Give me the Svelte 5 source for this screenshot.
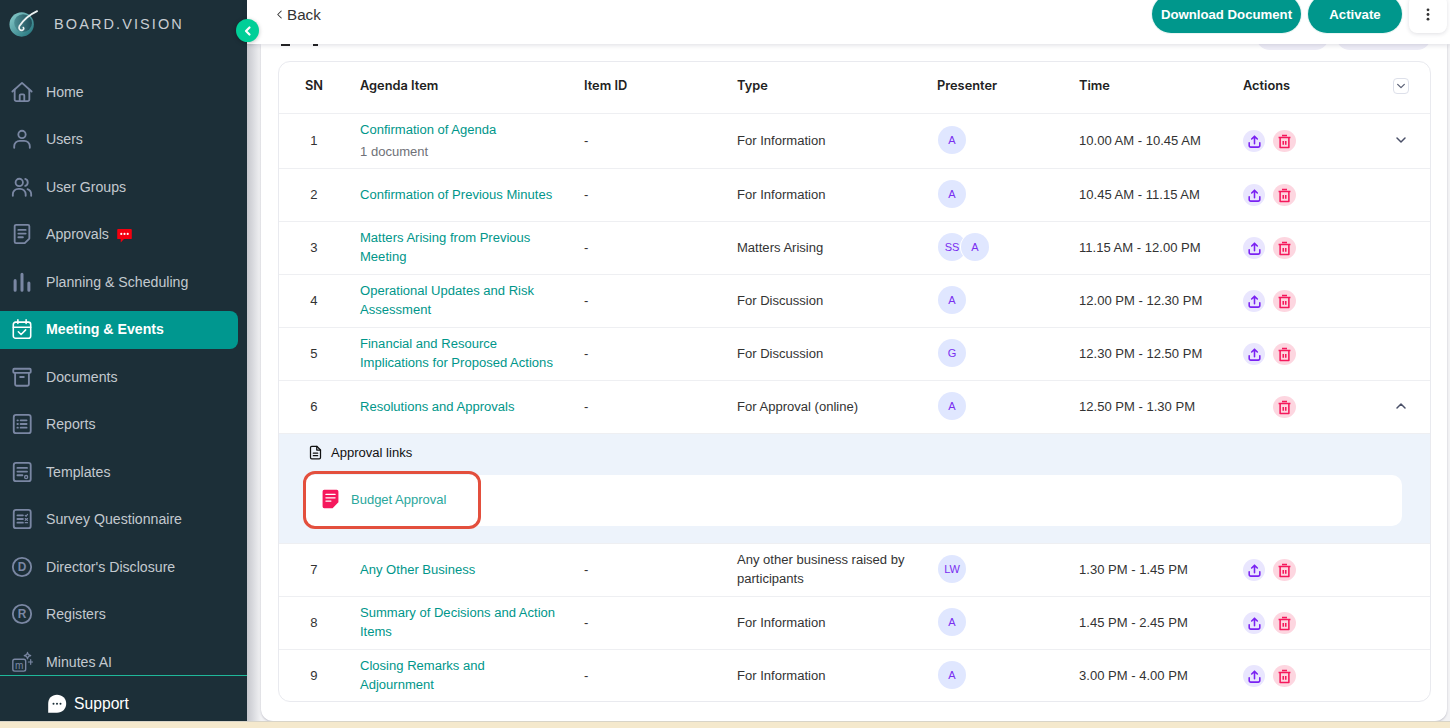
<script>
  const nav = [
    { label: 'Home', icon: 'home' },
    { label: 'Users', icon: 'user' },
    { label: 'User Groups', icon: 'users' },
    { label: 'Approvals', icon: 'approvals', badge: true },
    { label: 'Planning & Scheduling', icon: 'bars' },
    { label: 'Meeting & Events', icon: 'calendar', active: true },
    { label: 'Documents', icon: 'archive' },
    { label: 'Reports', icon: 'list' },
    { label: 'Templates', icon: 'template' },
    { label: 'Survey Questionnaire', icon: 'survey' },
    { label: "Director's Disclosure", icon: 'd' },
    { label: 'Registers', icon: 'r' },
    { label: 'Minutes AI', icon: 'minutes' }
  ];
  const before = [
    { sn: 1, title: ['Confirmation of Agenda'], sub: '1 document', type: 'For Information', who: ['A'], time: '10.00 AM - 10.45 AM', h: 55, chevron: 'down' },
    { sn: 2, title: ['Confirmation of Previous Minutes'], type: 'For Information', who: ['A'], time: '10.45 AM - 11.15 AM', h: 53 },
    { sn: 3, title: ['Matters Arising from Previous', 'Meeting'], type: 'Matters Arising', who: ['SS', 'A'], time: '11.15 AM - 12.00 PM', h: 53 },
    { sn: 4, title: ['Operational Updates and Risk', 'Assessment'], type: 'For Discussion', who: ['A'], time: '12.00 PM - 12.30 PM', h: 53 },
    { sn: 5, title: ['Financial and Resource', 'Implications for Proposed Actions'], type: 'For Discussion', who: ['G'], time: '12.30 PM - 12.50 PM', h: 53 },
    { sn: 6, title: ['Resolutions and Approvals'], type: 'For Approval (online)', who: ['A'], time: '12.50 PM - 1.30 PM', h: 53, chevron: 'up', noUpload: true }
  ];
  const after = [
    { sn: 7, title: ['Any Other Business'], type: ['Any other business raised by', 'participants'], who: ['LW'], time: '1.30 PM - 1.45 PM', h: 53 },
    { sn: 8, title: ['Summary of Decisions and Action', 'Items'], type: 'For Information', who: ['A'], time: '1.45 PM - 2.45 PM', h: 53 },
    { sn: 9, title: ['Closing Remarks and', 'Adjournment'], type: 'For Information', who: ['A'], time: '3.00 PM - 4.00 PM', h: 53 }
  ];
</script>

{#snippet navIcon(name)}
  <svg class="nav-icon" viewBox="0 0 24 24" fill="none" stroke="currentColor" stroke-width="2" stroke-linecap="round" stroke-linejoin="round">
    {#if name === 'home'}
      <path d="M1.500 11.500 12 2l10.500 9.500" /><path d="M4 9.500v10.700a1.800 1.800 0 0 0 1.800 1.800h12.400a1.800 1.800 0 0 0 1.800-1.800V9.500" /><path d="M9.500 22v-6.200a1.200 1.200 0 0 1 1.200-1.200h2.600a1.200 1.200 0 0 1 1.200 1.200V22" />
    {:else if name === 'user'}
      <circle cx="12" cy="7" r="4" /><path d="M3.500 21.500v-1.500a6 6 0 0 1 6-6h5a6 6 0 0 1 6 6v1.500" />
    {:else if name === 'users'}
      <circle cx="9" cy="7" r="4" /><path d="M2 21.500V20a6 6 0 0 1 6-6h2a6 6 0 0 1 6 6v1.500" /><path d="M15.500 3.200a4 4 0 0 1 0 7.600" /><path d="M18 14.300a6 6 0 0 1 4 5.700v1.500" />
    {:else if name === 'approvals'}
      <path d="M5.500 2h13A1.500 1.500 0 0 1 20 3.500V17l-5 5H5.500A1.500 1.500 0 0 1 4 20.500v-17A1.500 1.500 0 0 1 5.500 2Z" /><path d="M8 7.500h8M8 11.500h8M8 15.500h5" />
    {:else if name === 'bars'}
      <path d="M4.500 10.500V21M12 3.500V21M19.500 13V21" stroke-width="3.300" />
    {:else if name === 'calendar'}
      <rect x="2.500" y="4.500" width="19" height="17.500" rx="2.500" stroke-width="1.700" /><path d="M2.500 10h19M7.500 2v4M16.500 2v4" stroke-width="1.700" /><path d="m8 15 3 3 5-5" stroke-width="1.700" />
    {:else if name === 'archive'}
      <rect x="2.500" y="3" width="19" height="4.500" rx="1" /><path d="M4.500 7.500V20a1.500 1.500 0 0 0 1.500 1.500h12a1.500 1.500 0 0 0 1.500-1.500V7.500" /><path d="M10 12h4" />
    {:else if name === 'list'}
      <rect x="3" y="2" width="18.500" height="20" rx="2.500" /><path d="M7 8h.5M7 12h.5M7 16h.5M10.500 8H17M10.500 12H17M10.500 16H17" />
    {:else if name === 'template'}
      <rect x="3" y="2" width="18.500" height="20" rx="2.500" /><path d="M7 7.500h10.500M7 11.500h10.500M7 15.500h5.500" /><circle cx="16.500" cy="17.500" r="1.700" stroke-width="1.400" />
    {:else if name === 'survey'}
      <rect x="3" y="2" width="18.500" height="20" rx="2.500" /><path d="M7 8h6M7 12h6M7 16h6" /><path d="M15.500 8l1 1 1.500-2M15.500 11.500l2.500 2M18 11.500l-2.500 2M15.500 16h2.500" stroke-width="1.300" />
    {:else if name === 'd' || name === 'r'}
      <circle cx="12" cy="12" r="10" /><text class="glyph" x="12" y="16.800" text-anchor="middle">{name.toUpperCase()}</text>
    {:else if name === 'minutes'}
      <rect x="2" y="9" width="14" height="13" rx="2" stroke-width="1.500" /><text class="glyph small" x="9" y="19.500" text-anchor="middle">m</text><path d="M18 1.500l1 2.500 2.500 1-2.500 1-1 2.500-1-2.500-2.500-1 2.500-1ZM19 12h5M21.500 9.500v5" stroke-width="1.300" />
    {/if}
  </svg>
{/snippet}

{#snippet chevron(dir, cls)}
  <svg class={cls} viewBox="0 0 12 12" fill="none" stroke="currentColor" stroke-width="1.500" stroke-linecap="round" stroke-linejoin="round">
    <path d={dir === 'up' ? 'M2 8l4-4 4 4' : 'M2 4l4 4 4-4'} />
  </svg>
{/snippet}

{#snippet row(r)}
  <div class="row" style="height:{r.h}px">
    <div class="sn">{r.sn}</div>
    <div class="title">
      {#each r.title as line}<span class="link">{line}</span>{/each}
      {#if r.sub}<span class="sub">{r.sub}</span>{/if}
    </div>
    <div>-</div>
    <div class="type">
      {#if Array.isArray(r.type)}{#each r.type as line}<span>{line}</span>{/each}{:else}{r.type}{/if}
    </div>
    <div class="who">
      {#each r.who as w}<span class="avatar">{w}</span>{/each}
    </div>
    <div>{r.time}</div>
    <div class="actions" class:no-upload={r.noUpload}>
      {#if !r.noUpload}
        <span class="act up">
          <svg viewBox="0 0 24 24" fill="none" stroke="currentColor" stroke-width="2.500" stroke-linecap="round" stroke-linejoin="round"><path d="M12 15.500V4M7.500 8 12 3.500 16.500 8" /><path d="M3.500 14v4.500A2.500 2.500 0 0 0 6 21h12a2.500 2.500 0 0 0 2.500-2.500V14" /></svg>
        </span>
      {/if}
      <span class="act del">
        <svg viewBox="0 0 24 24" fill="none" stroke="currentColor" stroke-width="2.500" stroke-linejoin="round"><path d="M2.500 5.500h19M8 2.500h8" /><path d="M5 6v15.500h14V6" /><path d="M10 11v6M14 11v6" /></svg>
      </span>
    </div>
    <div class="end">
      {#if r.chevron}{@render chevron(r.chevron, 'row-chev')}{/if}
    </div>
  </div>
{/snippet}

<div class="page">
  <div class="shell">
    <aside class="sidebar">
      <div class="brand">
        <svg class="logo" viewBox="0 0 32 28" fill="none">
          <defs>
            <linearGradient id="lg" x1="0" y1="0" x2="1" y2="1">
              <stop offset="0" stop-color="#8ed0cf" /><stop offset="1" stop-color="#1d6f78" />
            </linearGradient>
            <linearGradient id="lg2" x1="0" y1="0" x2="1" y2="0">
              <stop offset="0" stop-color="#4d8f95" /><stop offset="1" stop-color="#1f4d58" />
            </linearGradient>
          </defs>
          <circle cx="13.500" cy="15" r="13" fill="url(#lg)" />
          <circle cx="15" cy="13.500" r="9.500" fill="url(#lg2)" />
          <path d="M30 .8C21 5 15 10.500 11 17c-1 2.200.5 4.500 3 4.300 1.600-.2 2.200-1.800 1.300-3" stroke="#edf3f3" stroke-width="1.800" stroke-linecap="round" />
        </svg>
        <span class="brand-name">BOARD.VISION</span>
      </div>
      <nav class="nav">
        {#each nav as item}
          <div class="nav-item" class:active={item.active}>
            {@render navIcon(item.icon)}
            <span>{item.label}</span>
            {#if item.badge}
              <svg class="badge" viewBox="0 0 14 14"><path d="M1 1h12a.8.8 0 0 1 .8.8v7.700a.8.8 0 0 1-.8.8H6.500L3.500 13.500v-3.200H1a.8.8 0 0 1-.8-.8V1.800A.8.8 0 0 1 1 1Z" fill="#f4000f" /><circle cx="4" cy="5.500" r="1" fill="#fff" /><circle cx="7" cy="5.500" r="1" fill="#fff" /><circle cx="10" cy="5.500" r="1" fill="#fff" /></svg>
            {/if}
          </div>
        {/each}
      </nav>
      <div class="support">
        <svg viewBox="0 0 20 20"><path d="M10 .8c5.200 0 9.200 3.800 9.200 8.900s-4 9-9.200 9H1.200v-9C1.200 4.600 4.800.8 10 .8Z" fill="#fff" /><circle cx="6.500" cy="9.800" r="1" fill="#1c2f38" /><circle cx="10" cy="9.800" r="1" fill="#1c2f38" /><circle cx="13.500" cy="9.800" r="1" fill="#1c2f38" /></svg>
        <span>Support</span>
      </div>
    </aside>

    <button class="toggle" aria-label="Collapse sidebar">
      <svg viewBox="0 0 12 12" fill="none" stroke="#fff" stroke-width="2.200" stroke-linecap="round" stroke-linejoin="round"><path d="M7.500 2.500 4 6l3.500 3.500" /></svg>
    </button>

    <main class="main">
      <header class="topbar">
        <div class="back">
          <svg viewBox="0 0 8 12" fill="none" stroke="currentColor" stroke-width="1.200" stroke-linecap="round" stroke-linejoin="round"><path d="M6 2 2 6l4 4" /></svg>
          <span>Back</span>
        </div>
        <div class="top-actions">
          <button class="pill download">Download Document</button>
          <button class="pill activate">Activate</button>
          <button class="more" aria-label="More">
            <svg viewBox="0 0 4 16"><circle cx="2" cy="3" r="1.500" fill="#333" /><circle cx="2" cy="8" r="1.500" fill="#333" /><circle cx="2" cy="13" r="1.500" fill="#333" /></svg>
          </button>
        </div>
      </header>

      <div class="content">
        <div class="card">
          <div class="peek">
            <div class="peek-bits"><i class="b1"></i><i class="b2"></i></div>
            <div class="peek-btns"><i class="p1"></i><i class="p2"></i></div>
          </div>
          <div class="table">
            <div class="row head">
              <div class="sn">SN</div>
              <div>Agenda Item</div>
              <div>Item ID</div>
              <div>Type</div>
              <div>Presenter</div>
              <div>Time</div>
              <div>Actions</div>
              <div class="end"><span class="head-toggle">{@render chevron('down', 'head-chev')}</span></div>
            </div>
            {#each before as r}{@render row(r)}{/each}
            <div class="panel">
              <div class="panel-head">
                <svg viewBox="0 0 24 24" fill="none" stroke="#111" stroke-width="2" stroke-linejoin="round" stroke-linecap="round"><path d="M14 2H6a2 2 0 0 0-2 2v16a2 2 0 0 0 2 2h12a2 2 0 0 0 2-2V8Z" /><path d="M14 2v6h6M8.500 13h7M8.500 17h7" /></svg>
                <span>Approval links</span>
              </div>
              <div class="panel-body">
                <div class="approval">
                  <svg viewBox="0 0 20 24"><path d="M2.500 1h15A2 2 0 0 1 19.500 3v13L12.500 23H2.500A2 2 0 0 1 .5 21V3a2 2 0 0 1 2-2Z" fill="#f5185c" /><path d="M4.500 6.500h11M4.500 10.500h11M4.500 14.500h6" stroke="#fff" stroke-width="1.500" stroke-linecap="round" /></svg>
                  <span>Budget Approval</span>
                </div>
              </div>
            </div>
            {#each after as r}{@render row(r)}{/each}
          </div>
        </div>
      </div>
    </main>
  </div>
  <div class="taskbar"></div>
</div>

<style>
  :global(body) { margin: 0; }
  * { box-sizing: border-box; }
  .page {
    width: 1450px; height: 728px; overflow: hidden;
    display: flex; flex-direction: column;
    font-family: Inter, "Liberation Sans", sans-serif;
    background: #f4e8c9;
  }
  .shell { position: relative; flex: none; height: 721px; display: flex; }
  .taskbar { flex: 1; background: #f5e9cd; border-top: 1px solid #d8d4c8; }

  .sidebar {
    width: 247px; flex: none; background: #1c2f38; color: #c7cdd4;
    display: flex; flex-direction: column; overflow: hidden;
  }
  .brand { height: 44px; flex: none; display: flex; align-items: center; padding: 3px 0 0 9px; }
  .logo { width: 30px; height: 27px; }
  .brand-name {
    margin-left: 15px; font-family: "Liberation Sans", sans-serif;
    font-size: 14.500px; letter-spacing: 2.100px; color: #c8cdd2;
  }
  .nav { flex: 1; min-height: 0; overflow: hidden; padding-top: 29.700px; display: flex; flex-direction: column; gap: 9.500px; }
  .nav-item {
    flex: none; height: 38px; width: 237.500px; display: flex; align-items: center;
    padding: 0 0 2px 11px; gap: 13px;
    font-family: "Liberation Sans", sans-serif; font-size: 14.150px;
    border-radius: 0 8px 8px 0; color: #c3c9cf;
  }
  .nav-icon { width: 22px; height: 22px; color: #7a87a3; flex: none; }
  .nav-item.active { background: #00978f; color: #fff; font-weight: 700; }
  .nav-item.active .nav-icon { color: #fff; }
  .glyph { font-family: "Liberation Sans", sans-serif; font-size: 13px; font-weight: 700; fill: currentColor; stroke: none; }
  .glyph.small { font-size: 11px; font-weight: 400; }
  .badge { width: 15px; height: 15px; margin-left: -5px; margin-top: 2px; }
  .support {
    flex: none; height: 46px; border-top: 1px solid #1fb89a;
    display: flex; align-items: center; padding: 10px 0 0 47px; gap: 7px;
    font-family: "Liberation Sans", sans-serif; font-size: 15.700px; color: #fff;
  }
  .support svg { width: 20px; height: 20px; }

  .toggle {
    position: absolute; left: 236px; top: 19px; width: 23px; height: 23px; padding: 0;
    border: 0; border-radius: 50%; background: #00cf98; z-index: 5;
    display: flex; align-items: center; justify-content: center;
    box-shadow: 0 1px 4px rgba(0,0,0,.25);
  }
  .toggle svg { width: 12px; height: 12px; }

  .main { flex: 1; min-width: 0; display: flex; flex-direction: column; background: #f4f4f6; }
  .topbar {
    position: relative; z-index: 2; height: 44px; flex: none; background: #fff;
    display: flex; align-items: flex-start; justify-content: space-between;
    box-shadow: 0 1px 5px rgba(40,40,70,.16);
    padding: 0 3px 0 29px;
  }
  .back { display: flex; align-items: center; gap: 4px; height: 28px; color: #333; font-family: "Liberation Sans", sans-serif; font-size: 15.200px; }
  .back svg { width: 7px; height: 11px; }
  .top-actions { display: flex; gap: 7px; align-items: flex-start; margin-top: -5px; }
  .pill {
    height: 38px; border: 0; border-radius: 19px; background: #00978c; color: #fff;
    font-family: "Liberation Sans", sans-serif; font-size: 13.200px; font-weight: 700; padding: 0;
    box-shadow: 0 0 0 1px #e9f5f3;
  }
  .download { width: 149px; }
  .activate { width: 94px; }
  .more {
    width: 38px; height: 38px; margin: 0; padding: 0; border: 0; border-radius: 8px; background: #fff;
    box-shadow: 0 1px 4px rgba(40,40,70,.15); display: flex; align-items: center; justify-content: center;
  }
  .more svg { width: 4px; height: 15px; }

  .content {
    flex: 1; min-height: 0; overflow: hidden; padding-left: 14px; padding-right: 3px;
    background: linear-gradient(90deg, #c6c7cd 0, #dcdde1 7px, #f3f3f5 14px);
  }
  .card {
    height: 100%; background: #fff; border-radius: 0 0 12px 12px;
    padding: 0 16px 0 17px;
    box-shadow: 0 1px 2px rgba(40,40,70,.25);
  }
  .peek { height: 17px; display: flex; justify-content: space-between; overflow: hidden; }
  .peek-bits { display: flex; padding-left: 3px; height: 2px; }
  .peek-bits i { display: block; height: 2px; background: #222; }
  .b1 { width: 9px; }
  .b2 { width: 5px; margin-left: 23px; }
  .peek-btns { display: flex; gap: 7px; margin-top: -30px; }
  .peek-btns i { display: block; height: 36px; border-radius: 14px; background: #eeedf7; }
  .p1 { width: 73px; }
  .p2 { width: 95px; }

  .table {
    border: 1px solid #e9eaef; border-radius: 12px; height: 641px; overflow: hidden;
    font-family: "Liberation Sans", sans-serif; font-size: 13.050px; color: #333;
  }
  .row {
    display: grid; grid-template-columns: 81px 224px 153px 200px 142px 164px 122px 1fr;
    align-items: center; border-top: 1px solid #eeeff2; padding-bottom: 2px;
  }
  .head {
    height: 51px; padding-bottom: 4px; border-top: 0; font-family: Inter, "Liberation Sans", sans-serif;
    font-weight: 600; font-size: 12.800px; color: #222;
  }
  .sn { width: 70px; text-align: center; }
  .title { display: flex; flex-direction: column; line-height: 19px; }
  .link { color: #00968a; white-space: nowrap; }
  .sub { color: #6f7178; margin-top: 3px; }
  .type { line-height: 19px; }
  .type span { display: block; }
  .who { display: flex; padding-left: 1px; }
  .avatar {
    width: 28px; height: 28px; border-radius: 50%; background: #e0e7ff;
    color: #7a2ff0; font-size: 11px; display: flex; align-items: center; justify-content: center;
  }
  .avatar + .avatar { margin-left: -5px; box-shadow: -1px 0 0 #fff; }
  .actions { display: flex; gap: 8px; transform: translateY(1px); }
  .actions.no-upload { padding-left: 30px; }
  .act { width: 22px; height: 22px; border-radius: 50%; display: flex; align-items: center; justify-content: center; }
  .act svg { width: 15px; height: 15px; }
  .up { background: #e9e6fe; color: #7a22f2; }
  .del { width: 23px; background: #fdd6e0; color: #f5195c; }
  .end { display: flex; justify-content: center; padding-left: 7px; color: #4a5068; }
  .head-toggle {
    width: 16px; height: 16px; border: 1px solid #dde0ea; border-radius: 4px;
    display: flex; align-items: center; justify-content: center; color: #5a6075;
  }
  :global(.head-chev) { width: 10px; height: 10px; }
  :global(.row-chev) { width: 12px; height: 12px; }

  .panel { height: 110px; background: #edf3fb; border-top: 1px solid #eeeff2; padding: 0 28px 0 24px; }
  .panel-head { height: 41px; padding-bottom: 4px; display: flex; align-items: center; gap: 8px; color: #111; }
  .panel-head svg { width: 15px; height: 15px; margin-left: 5px; }
  .panel-body { height: 51px; background: #fff; border-radius: 10px; }
  .approval {
    position: relative; display: flex; align-items: center; gap: 12px;
    width: 178px; height: 58px; top: -4px; padding: 0 0 2px 16px;
    border: 3px solid #e34f3d; border-radius: 12px; color: #2aa79c; font-size: 13px;
  }
  .approval svg { width: 17px; height: 20px; }
</style>
